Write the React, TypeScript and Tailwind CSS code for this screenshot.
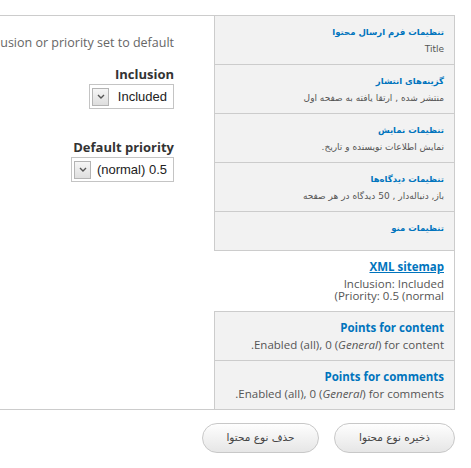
import { ReactNode } from 'react';

type Tab = {
  title: string;
  summary?: ReactNode;
  fa?: boolean;
  active?: boolean;
};

const tabs: Tab[] = [
  { title: 'تنظیمات فرم ارسال محتوا', summary: 'Title', fa: true },
  { title: 'گزینه‌های انتشار', summary: 'منتشر شده , ارتقا یافته به صفحه اول', fa: true },
  { title: 'تنظیمات نمایش', summary: 'نمایش اطلاعات نویسنده و تاریخ.', fa: true },
  { title: 'تنظیمات دیدگاه‌ها', summary: 'باز, دنباله‌دار , 50 دیدگاه در هر صفحه', fa: true },
  { title: 'تنظیمات منو', fa: true },
  {
    title: 'XML sitemap',
    active: true,
    summary: (
      <>
        Inclusion: Included
        <br />
        <span dir="ltr">(Priority: 0.5 (normal</span>
      </>
    ),
  },
  {
    title: 'Points for content',
    summary: <span dir="ltr">.Enabled (all), 0 (<em>General</em>) for content</span>,
  },
  {
    title: 'Points for comments',
    summary: <span dir="ltr">.Enabled (all), 0 (<em>General</em>) for comments</span>,
  },
];

function FakeSelect({ value, width }: { value: string; width: string }) {
  return (
    <div
      className={`${width} h-[25px] border border-[#c4c4c4] bg-white flex items-center justify-between pl-[2px] pr-[6px] font-['Liberation_Sans',sans-serif] text-[13px] text-[#222]`}
    >
      <span>{value}</span>
      <span className="w-[17px] h-[18px] border border-[#b4b4b4] bg-gradient-to-b from-[#f6f6f6] to-[#dedede] flex items-center justify-center">
        <svg width="8" height="5" viewBox="0 0 8 5">
          <path d="M1 1 L4 4 L7 1" fill="none" stroke="#555" strokeWidth="1.4" />
        </svg>
      </span>
    </div>
  );
}

export default function App() {
  return (
    <div
      dir="rtl"
      className="w-[471px] h-[468px] overflow-hidden bg-white pt-[15px] pr-[16px] font-['Open_Sans','DejaVu_Sans',sans-serif]"
    >
      {/* vertical tabs */}
      <div className="flex border-t border-b border-r border-[#cccccc]">
        <ul className="w-[240px] shrink-0 bg-[#f2f2f2]">
          {tabs.map((tab) => (
            <li
              key={tab.title}
              className={`border-b last:border-b-0 border-[#cccccc] pt-[9px] pr-[10px] ${
                tab.active ? 'bg-white' : 'border-l'
              } ${tab.summary ? 'pb-[9px]' : 'pb-[15px]'}`}
            >
              <div
                className={`leading-[14px] font-bold text-[#0074bd] ${
                  tab.fa ? "font-['DejaVu_Sans',sans-serif] text-[8.5px]" : 'text-[11.5px]'
                } ${tab.active ? 'underline' : ''}`}
              >
                {tab.title}
              </div>
              {tab.summary && (
                <div
                  className={`mt-[4px] leading-[12px] text-[#555] ${
                    tab.fa ? "font-['DejaVu_Sans',sans-serif] text-[9px]" : 'text-[11.5px]'
                  }`}
                >
                  {tab.summary}
                </div>
              )}
            </li>
          ))}
        </ul>

        {/* pane */}
        <div className="flex-1 min-w-0 bg-white pt-[19px] pr-[40px] overflow-hidden">
          <p className="leading-[16px] text-[12.5px] text-[#666] whitespace-nowrap">
            Changing these type settings will affect any items of this type that have either inclusion or priority set to default.
          </p>
          <div className="mt-[15px] flex flex-col items-start">
            <label className="leading-[16px] text-[13px] font-bold text-[#333] mb-[2px]">Inclusion</label>
            <FakeSelect value="Included" width="w-[85px]" />
          </div>
          <div className="mt-[30px] flex flex-col items-start">
            <label className="leading-[16px] text-[13px] font-bold text-[#333] mb-[2px]">Default priority</label>
            <FakeSelect value="0.5 (normal)" width="w-[103px]" />
          </div>
        </div>
      </div>

      {/* actions */}
      <div className="mt-[13px] flex gap-[15px]">
        <button className="w-[121px] h-[30px] rounded-full border border-[#c8c8c8] bg-gradient-to-b from-[#fefefe] to-[#e6e6e6] text-[#444] text-[10.5px] font-['DejaVu_Sans',sans-serif]">
          ذخیره نوع محتوا
        </button>
        <button className="w-[117px] h-[30px] rounded-full border border-[#c8c8c8] bg-gradient-to-b from-[#fefefe] to-[#e6e6e6] text-[#444] text-[10.5px] font-['DejaVu_Sans',sans-serif]">
          حذف نوع محتوا
        </button>
      </div>
    </div>
  );
}
